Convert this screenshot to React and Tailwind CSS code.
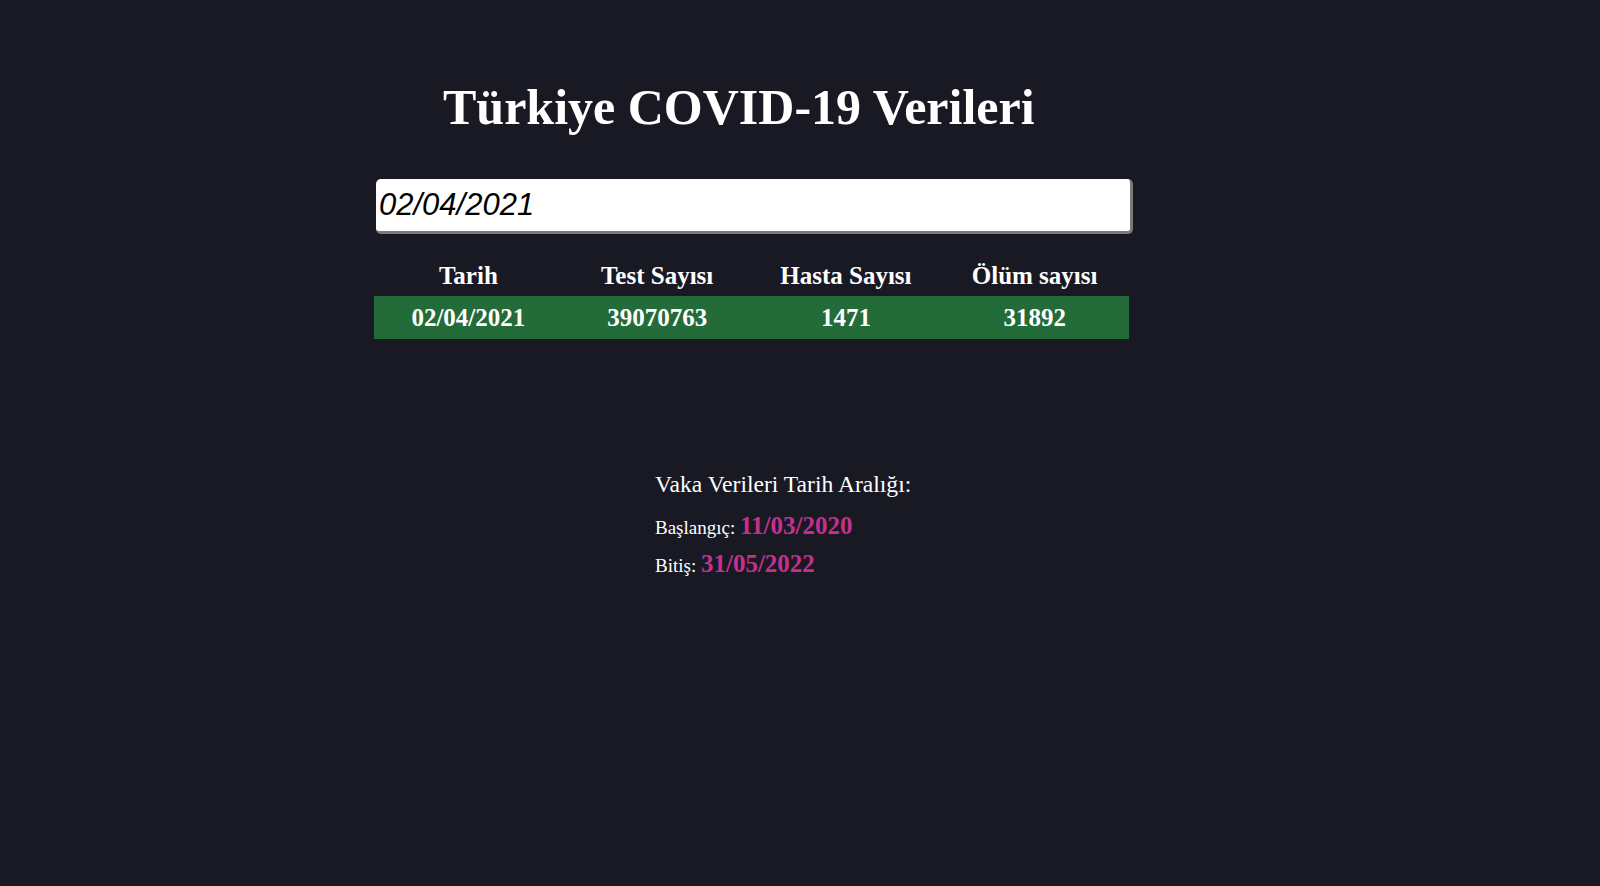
import { useState } from 'react';

const rows = [{ date: '02/04/2021', tests: '39070763', cases: '1471', deaths: '31892' }];

export default function App() {
  const [date, setDate] = useState('02/04/2021');

  return (
    <div className="min-h-[886px] w-full bg-[#191923] text-white font-['Liberation_Serif',_'Times_New_Roman',serif]">
      <div className="pl-[374px] pt-[78px]">
        {/* Title */}
        <h1 className="pl-[69px] text-[50px] leading-[58px] font-bold">Türkiye COVID-19 Verileri</h1>

        {/* Date input */}
        <input
          type="text"
          value={date}
          onChange={e => setDate(e.target.value)}
          className="mt-[43px] ml-[2px] block w-[757px] h-[55px] bg-white rounded-[5px] border-r-[3px] border-b-[3px] border-[#7a7a7a] px-[3px] text-[31px] italic text-black font-['Liberation_Sans',_Arial,sans-serif] outline-none"
        />

        {/* Table */}
        <div className="mt-[21px] w-[755px] text-[25px] font-bold">
          <div className="grid grid-cols-4 h-[41px] items-center text-center">
            <div>Tarih</div>
            <div>Test Sayısı</div>
            <div>Hasta Sayısı</div>
            <div>Ölüm sayısı</div>
          </div>
          {rows.map(r => (
            <div key={r.date} className="grid grid-cols-4 h-[43px] items-center text-center bg-[#246b3a]">
              <div>{r.date}</div>
              <div>{r.tests}</div>
              <div>{r.cases}</div>
              <div>{r.deaths}</div>
            </div>
          ))}
        </div>

        {/* Date range */}
        <div className="mt-[131px] pl-[281px]">
          <div className="text-[23.6px] leading-[28px]">Vaka Verileri Tarih Aralığı:</div>
          <div className="mt-[14px] text-[19px] leading-[28px]">
            Başlangıç: <span className="text-[25px] font-bold text-[#c4318d]">11/03/2020</span>
          </div>
          <div className="mt-[8px] text-[19px] leading-[28px]">
            Bitiş: <span className="text-[25px] font-bold text-[#c4318d]">31/05/2022</span>
          </div>
        </div>
      </div>
    </div>
  );
}
